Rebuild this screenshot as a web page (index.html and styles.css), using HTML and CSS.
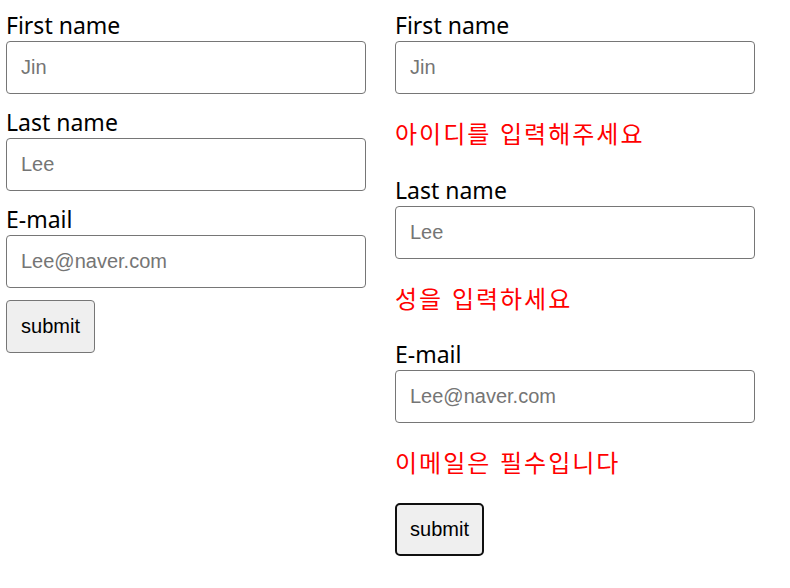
FILE: index.html
```html
<!DOCTYPE html>
<html lang="ko">
<head>
<meta charset="utf-8">
<title>Forms</title>
<link rel="stylesheet" href="styles.css">
</head>
<body>
<div class="page">
  <form class="form">
    <div class="field">
      <label class="label" for="a1">First name</label>
      <input class="input" id="a1" type="text" placeholder="Jin">
    </div>
    <div class="field">
      <label class="label" for="a2">Last name</label>
      <input class="input" id="a2" type="text" placeholder="Lee">
    </div>
    <div class="field">
      <label class="label" for="a3">E-mail</label>
      <input class="input" id="a3" type="text" placeholder="Lee@naver.com">
    </div>
    <div class="actions">
      <button class="btn" type="button">submit</button>
    </div>
  </form>
  <form class="form">
    <div class="field">
      <label class="label" for="b1">First name</label>
      <input class="input" id="b1" type="text" placeholder="Jin">
      <p class="error">아이디를 입력해주세요</p>
    </div>
    <div class="field">
      <label class="label" for="b2">Last name</label>
      <input class="input" id="b2" type="text" placeholder="Lee">
      <p class="error">성을 입력하세요</p>
    </div>
    <div class="field">
      <label class="label" for="b3">E-mail</label>
      <input class="input" id="b3" type="text" placeholder="Lee@naver.com">
      <p class="error">이메일은 필수입니다</p>
    </div>
    <div class="actions">
      <button class="btn btn-focus" type="button">submit</button>
    </div>
  </form>
</div>
</body>
</html>
```
FILE: styles.css
```css
* { box-sizing: border-box; }
html, body { margin: 0; padding: 0; background: #fff; }
body { font-family: "Noto Sans", "Noto Sans CJK KR", sans-serif; color: #000; }
.page {
  display: flex;
  gap: 29px;
  padding: 9px 6px;
}
.form {
  width: 360px;
  display: flex;
  flex-direction: column;
  margin: 0;
}
.field {
  display: flex;
  flex-direction: column;
  margin-bottom: 12px;
}
.label {
  font-size: 23px;
  line-height: 31px;
  padding-top: 1px;
}
.input {
  width: 360px;
  height: 53px;
  padding: 14px;
  border: 1px solid #767676;
  border-radius: 4px;
  font-family: "Liberation Sans", Arial, sans-serif;
  font-size: 20px;
  color: #000;
  background: #fff;
  outline: none;
}
.input::placeholder { color: #757575; opacity: 1; }
.error {
  margin: 23px 0 13px;
  font-family: "Noto Sans CJK KR", sans-serif;
  font-size: 24px;
  line-height: 31.5px;
  letter-spacing: 2px;
  color: #ff0000;
}
.actions { display: flex; }
.btn {
  width: 89px;
  height: 53px;
  padding: 0;
  border: 1px solid #767676;
  border-radius: 4px;
  background: #efefef;
  font-family: "Liberation Sans", Arial, sans-serif;
  font-size: 20px;
  color: #000;
}
.btn-focus {
  border: 2px solid #101010;
  border-radius: 5px;
}
```
